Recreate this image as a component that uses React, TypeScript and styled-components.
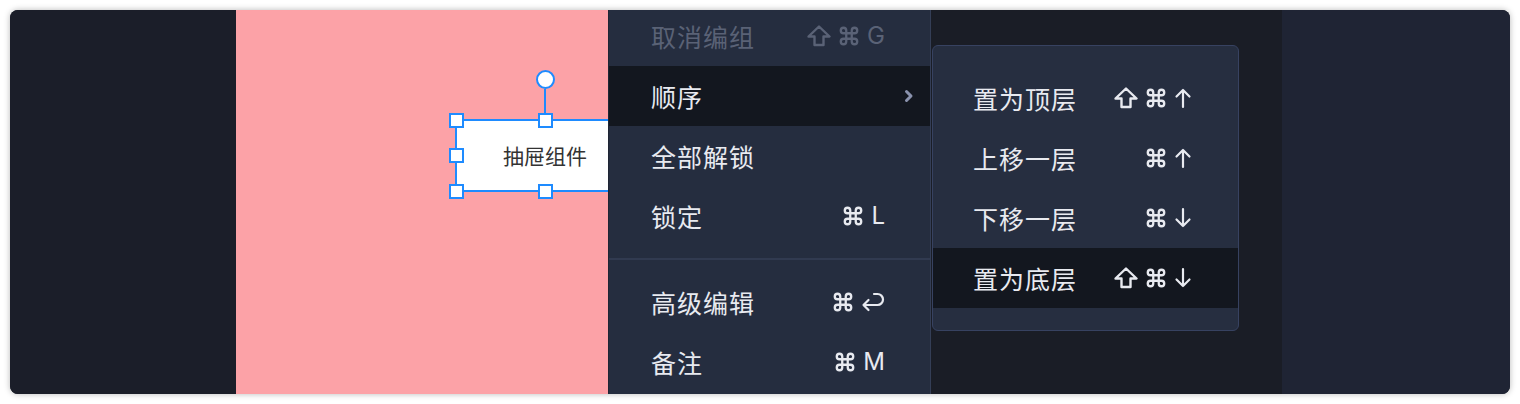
import React from 'react';
import styled, { createGlobalStyle } from 'styled-components';

const GlobalStyle = createGlobalStyle`
  html, body {
    margin: 0;
    padding: 0;
    background: #ffffff;
  }
  body {
    font-family: "Noto Sans CJK SC", "Noto Sans", sans-serif;
  }
`;

type Key = 'shift' | 'cmd' | 'up' | 'down' | 'enter' | string;

type MenuItemType = {
    label: string
    keys?: Key[]
    disabled?: boolean
    active?: boolean
    submenu?: boolean
    divider?: boolean
};

const mainItems: MenuItemType[] = [
    { label: '取消编组', keys: ['shift', 'cmd', 'G'], disabled: true },
    { label: '顺序', submenu: true, active: true },
    { label: '全部解锁' },
    { label: '锁定', keys: ['cmd', 'L'] },
    { label: '', divider: true },
    { label: '高级编辑', keys: ['cmd', 'enter'] },
    { label: '备注', keys: ['cmd', 'M'] },
];

const orderItems: MenuItemType[] = [
    { label: '置为顶层', keys: ['shift', 'cmd', 'up'] },
    { label: '上移一层', keys: ['cmd', 'up'] },
    { label: '下移一层', keys: ['cmd', 'down'] },
    { label: '置为底层', keys: ['shift', 'cmd', 'down'], active: true },
];

// corner / edge handles of the selected element, in % of its box
const handles: [number, number][] = [
    [0, 0], [50, 0], [100, 0],
    [0, 50],
    [0, 100], [50, 100], [100, 100],
];

const KeyIcon: React.FC<{ k: Key }> = ({ k }) => {
    switch (k) {
        case 'shift':
            return (
                <Svg width="24" height="22" viewBox="0 0 24 22">
                    <path d="M12 1.5 L22.5 11.5 H16.5 V20 H7.5 V11.5 H1.5 Z" fill="none" stroke="currentColor" strokeWidth="2.4" strokeLinejoin="round" />
                </Svg>
            );
        case 'cmd':
            return (
                <Svg width="22" height="22" viewBox="0 0 24 24">
                    <path d="M15 6v12a3 3 0 1 0 3-3H6a3 3 0 1 0 3 3V6a3 3 0 1 0-3 3h12a3 3 0 1 0-3-3" fill="none" stroke="currentColor" strokeWidth="2.5" strokeLinecap="round" strokeLinejoin="round" />
                </Svg>
            );
        case 'up':
            return (
                <Svg width="18" height="22" viewBox="0 0 18 22">
                    <path d="M9 20 V3 M2.5 9.5 L9 3 L15.5 9.5" fill="none" stroke="currentColor" strokeWidth="2.2" strokeLinecap="round" strokeLinejoin="round" />
                </Svg>
            );
        case 'down':
            return (
                <Svg width="18" height="22" viewBox="0 0 18 22">
                    <path d="M9 2 V19 M2.5 12.5 L9 19 L15.5 12.5" fill="none" stroke="currentColor" strokeWidth="2.2" strokeLinecap="round" strokeLinejoin="round" />
                </Svg>
            );
        case 'enter':
            return (
                <Svg width="24" height="22" viewBox="0 0 24 22">
                    <path d="M13 3 H16.5 a5.5 5.5 0 0 1 0 11 H2.5 M7.5 9 L2.5 14 L7.5 19" fill="none" stroke="currentColor" strokeWidth="2.2" strokeLinecap="round" strokeLinejoin="round" />
                </Svg>
            );
        default:
            return <Letter>{k}</Letter>;
    }
};

const Row: React.FC<{ item: MenuItemType; inset: number; right: number }> = ({ item, inset, right }) => {
    if (item.divider) {
        return <Divider />;
    }
    return (
        <Item $active={item.active} $disabled={item.disabled} $inset={inset} $right={right}>
            <Label>{item.label}</Label>
            {item.keys && (
                <Keys>
                    {item.keys.map((k, i) => <KeyIcon key={i} k={k} />)}
                </Keys>
            )}
            {item.submenu && (
                <Chevron width="10" height="14" viewBox="0 0 10 14">
                    <path d="M2.5 2.5 L7 7 L2.5 11.5" fill="none" stroke="#8a92ad" strokeWidth="3" strokeLinecap="round" strokeLinejoin="round" />
                </Chevron>
            )}
        </Item>
    );
};

export default function App() {
    return (
        <>
            <GlobalStyle />
            <Window>
                <LeftPanel />
                <Canvas>
                    <Artboard>
                        <Element>
                            <ElementText>抽屉组件</ElementText>
                            <RotateLine />
                            <RotateHandle />
                            {handles.map(([x, y], i) => (
                                <Handle key={i} $x={x} $y={y} />
                            ))}
                        </Element>
                    </Artboard>

                    <ContextMenu>
                        {mainItems.map((item, i) => (
                            <Row key={i} item={item} inset={42} right={45} />
                        ))}
                    </ContextMenu>

                    <SubMenu>
                        {orderItems.map((item, i) => (
                            <Row key={i} item={item} inset={40} right={46} />
                        ))}
                    </SubMenu>
                </Canvas>
                <RightPanel />
            </Window>
        </>
    );
}

const Window = styled.div`
  margin: 10px;
  width: 1500px;
  height: 384px;
  display: flex;
  border-radius: 8px;
  overflow: hidden;
  background: #1b1e29;
  box-shadow: 0 0 6px rgba(0, 0, 0, 0.28);
`

const LeftPanel = styled.div`
  width: 226px;
  flex-shrink: 0;
  background: #1b1e29;
`

const RightPanel = styled.div`
  width: 228px;
  flex-shrink: 0;
  background: #1f2434;
`

const Canvas = styled.div`
  position: relative;
  flex: 1;
  display: flex;
  background: #1a1d26;
`

const Artboard = styled.div`
  position: relative;
  width: 372px;
  height: 100%;
  background: #fca2a7;
`

const Element = styled.div`
  position: absolute;
  left: 219px;
  top: 109px;
  width: 180px;
  height: 73px;
  box-sizing: border-box;
  background: #ffffff;
  border: 2px solid #1e8bff;
  display: flex;
  align-items: center;
  justify-content: center;
`

const ElementText = styled.span`
  font-size: 21px;
  color: #333333;
  line-height: 1;
`

const Handle = styled.div<{ $x: number; $y: number }>`
  position: absolute;
  left: calc(${p => p.$x}% + ${p => p.$x / 50 - 1}px - 7.5px);
  top: calc(${p => p.$y}% + ${p => p.$y / 50 - 1}px - 7.5px);
  width: 15px;
  height: 15px;
  box-sizing: border-box;
  background: #ffffff;
  border: 2px solid #1e8bff;
`

const RotateLine = styled.div`
  position: absolute;
  left: calc(50% - 1px);
  top: -32px;
  width: 2px;
  height: 32px;
  background: #1e8bff;
`

const RotateHandle = styled.div`
  position: absolute;
  left: calc(50% - 9.5px);
  top: -51px;
  width: 19px;
  height: 19px;
  box-sizing: border-box;
  border-radius: 50%;
  background: #ffffff;
  border: 2px solid #1e8bff;
`

const ContextMenu = styled.div`
  position: absolute;
  left: 372px;
  top: -4px;
  width: 323px;
  box-sizing: border-box;
  background: #252d3f;
  border-left: 1px solid #1f2534;
  border-right: 1px solid #343e56;
  padding-bottom: 20px;
`

const SubMenu = styled.div`
  position: absolute;
  left: 696px;
  top: 35px;
  width: 307px;
  box-sizing: border-box;
  padding: 22px 0;
  background: #262e40;
  border: 1px solid #374261;
  border-radius: 6px;
  overflow: hidden;
`

const Item = styled.div<{ $active?: boolean; $disabled?: boolean; $inset: number; $right: number }>`
  position: relative;
  height: 60px;
  display: flex;
  align-items: center;
  justify-content: space-between;
  padding: 0 ${p => p.$right}px 0 ${p => p.$inset}px;
  background: ${p => (p.$active ? '#13171f' : 'transparent')};
  color: ${p => (p.$disabled ? '#5a6276' : '#e8eaf0')};
`

const Label = styled.span`
  font-size: 25px;
  line-height: 1;
  letter-spacing: 1px;
`

const Keys = styled.div`
  display: flex;
  align-items: center;
  gap: 7px;
`

const Svg = styled.svg`
  display: block;
`

const Letter = styled.span`
  font-family: Inter, "Liberation Sans", sans-serif;
  font-size: 24px;
  line-height: 1;
`

const Chevron = styled.svg`
  position: absolute;
  right: 16px;
  top: 23px;
`

const Divider = styled.div`
  height: 26px;
  display: flex;
  align-items: center;

  &::before {
    content: "";
    flex: 1;
    height: 2px;
    background: #313a50;
  }
`
